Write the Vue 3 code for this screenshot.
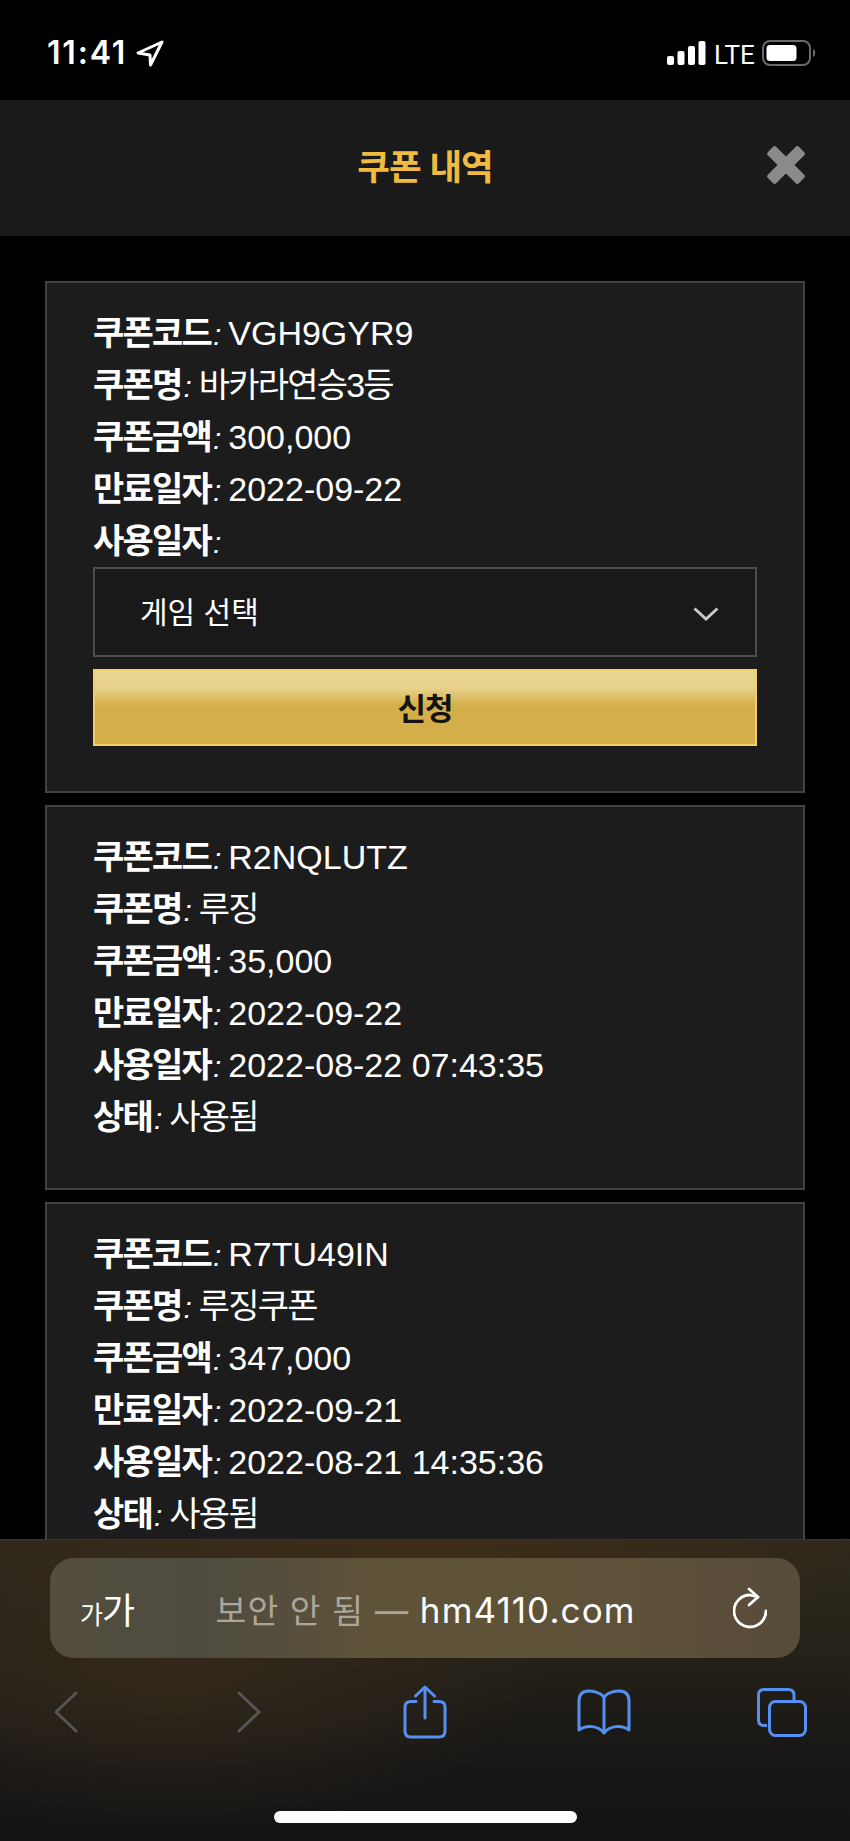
<script setup>
const coupons = [
  {
    code: 'VGH9GYR9', name: '바카라연승3등', amount: '300,000', expires: '2022-09-22', used: '', open: true
  },
  {
    code: 'R2NQLUTZ', name: '루징', amount: '35,000', expires: '2022-09-22', used: '2022-08-22 07:43:35', status: '사용됨'
  },
  {
    code: 'R7TU49IN', name: '루징쿠폰', amount: '347,000', expires: '2022-09-21', used: '2022-08-21 14:35:36', status: '사용됨'
  }
]

function rows(c) {
  const list = [
    ['쿠폰코드', c.code],
    ['쿠폰명', c.name],
    ['쿠폰금액', c.amount],
    ['만료일자', c.expires],
    ['사용일자', c.used]
  ]
  if (c.status) list.push(['상태', c.status])
  return list
}

const isKorean = (text) => /[가-힣]/.test(text)
</script>

<template>
  <div class="phone">
    <div class="status">
      <div class="clock">
        <span>11:41</span>
        <svg width="28" height="27" viewBox="0 0 28 27" fill="none" stroke="#fff" stroke-width="3" stroke-linejoin="round">
          <path d="M26 2 L2 13 L14 15 L14.500 25 Z" />
        </svg>
      </div>
      <div class="indicators">
        <svg width="39" height="24" viewBox="0 0 39 24" fill="#fff">
          <rect x="0" y="15" width="7" height="9" rx="2" />
          <rect x="10.500" y="10" width="7" height="14" rx="2" />
          <rect x="21" y="5" width="7" height="19" rx="2" />
          <rect x="31.500" y="0" width="7" height="24" rx="2" />
        </svg>
        <span class="lte">LTE</span>
        <svg class="battery" width="55" height="26" viewBox="0 0 55 26" fill="none">
          <rect x="1" y="1" width="47" height="24" rx="7" stroke="#6a6a6a" stroke-width="2" />
          <rect x="4.500" y="5" width="30" height="16" rx="3.500" fill="#fff" />
          <path d="M51 9 C54 10 54 16 51 17 Z" fill="#6a6a6a" />
        </svg>
      </div>
    </div>

    <header class="top">
      <h1>쿠폰 내역</h1>
      <svg class="close" width="38" height="38" viewBox="0 0 38 38" fill="#8a8a8a">
        <rect x="-3" y="13" width="44" height="12" rx="2.500" transform="rotate(45 19 19)" />
        <rect x="-3" y="13" width="44" height="12" rx="2.500" transform="rotate(-45 19 19)" />
      </svg>
    </header>

    <main class="list">
      <section v-for="c in coupons" :key="c.code" class="card">
        <div v-for="r in rows(c)" :key="r[0]" class="row">
          <b>{{ r[0] }}</b><i>:</i>
          <span :class="{ ko: isKorean(r[1]) }">{{ r[1] }}</span>
        </div>
        <template v-if="c.open">
          <div class="select-wrap">
            <select>
              <option>게임 선택</option>
            </select>
            <svg class="chevron" width="26" height="14" viewBox="0 0 26 14" fill="none" stroke="#c8c8c8" stroke-width="3">
              <path d="M1.500 1.500 L13 12 L24.500 1.500" />
            </svg>
          </div>
          <button class="apply">신청</button>
        </template>
      </section>
    </main>

    <footer class="safari">
      <div class="url">
        <span class="aa"><small>가</small>가</span>
        <span class="address"><em>보안 안 됨 — </em>hm4110.com</span>
        <svg width="34" height="42" viewBox="0 0 34 42" fill="none" stroke="#fff" stroke-width="2.800" stroke-linecap="round" stroke-linejoin="round">
          <path d="M33 24 A16 16 0 1 1 17 8 L25 10" />
          <path d="M16 2 L25 10 L16 18" />
        </svg>
      </div>
      <nav class="tools">
        <svg width="24" height="42" viewBox="0 0 24 42" fill="none" stroke="#555" stroke-width="3" stroke-linecap="round" stroke-linejoin="round">
          <path d="M22 2 L2 21 L22 40" />
        </svg>
        <svg class="forward" width="24" height="42" viewBox="0 0 24 42" fill="none" stroke="#555" stroke-width="3" stroke-linecap="round" stroke-linejoin="round">
          <path d="M2 2 L22 21 L2 40" />
        </svg>
        <svg class="share" width="44" height="54" viewBox="0 0 44 54" fill="none" stroke="#5590f0" stroke-width="3" stroke-linecap="round" stroke-linejoin="round">
          <path d="M13 16.500 H8 Q2 16.500 2 22 V46 Q2 52 8 52 H36 Q42 52 42 46 V22 Q42 16.500 36 16.500 H31" />
          <path d="M22 33 V2 M12.500 11 L22 2 L31.500 11" />
        </svg>
        <svg class="book" width="54" height="46" viewBox="0 0 54 46" fill="none" stroke="#5590f0" stroke-width="3" stroke-linecap="round" stroke-linejoin="round">
          <path d="M27 8 C23 3 15 2 12 2 C5 2 2 6 2 12 V41 C9 36 21 36 27 44 C33 36 45 36 52 41 V12 C52 6 49 2 42 2 C39 2 31 3 27 8 Z" />
          <path d="M27 8 V43" />
        </svg>
        <svg class="tabs" width="50" height="49" viewBox="0 0 50 49" fill="none" stroke="#5590f0" stroke-width="3" stroke-linejoin="round">
          <path d="M10 37.500 H7 Q1.500 37.500 1.500 32 V7 Q1.500 1.500 7 1.500 H31 Q37 1.500 37 7 V12" />
          <rect x="12.500" y="13.500" width="36" height="34" rx="6" />
        </svg>
      </nav>
      <div class="home"></div>
    </footer>
  </div>
</template>

<style>
html, body {
  margin: 0;
  background: #000;
}
</style>

<style scoped>
.phone {
  position: relative;
  width: 850px;
  height: 1841px;
  overflow: hidden;
  background: #000;
  color: #fff;
  font-family: "Liberation Sans", "Noto Sans CJK KR", sans-serif;
}

.status {
  height: 100px;
  display: flex;
  justify-content: space-between;
  align-items: flex-start;
  padding: 39px 33px 0 47px;
  box-sizing: border-box;
  background: #000;
}

.clock {
  display: flex;
  align-items: center;
  gap: 9px;
  font-family: Inter, sans-serif;
  font-size: 32px;
  font-weight: 600;
  letter-spacing: 1.800px;
  line-height: 28px;
}

.indicators {
  display: flex;
  align-items: flex-end;
  padding-top: 1px;
}

.lte {
  font-family: Roboto, sans-serif;
  font-size: 26px;
  line-height: 20px;
  margin: 0 9px 0 8px;
  width: 39px;
}

.battery {
  margin-bottom: -1px;
}

.top {
  position: relative;
  height: 136px;
  display: flex;
  align-items: center;
  justify-content: center;
  background: #1a1a1a;
}

.top h1 {
  margin: 0 0 8px;
  font-size: 35.500px;
  font-weight: 700;
  letter-spacing: -1px;
  color: #f0bb3f;
}

.close {
  position: absolute;
  right: 45px;
  top: 46px;
}

.list {
  display: flex;
  flex-direction: column;
  gap: 12px;
  padding: 45px 45px 0;
}

.card {
  padding: 24px 46px 45px;
  background: #1c1c1c;
  border: 2px solid #424242;
}

.row {
  height: 52px;
  line-height: 52px;
  font-size: 34px;
  white-space: nowrap;
}

.row b {
  font-weight: 700;
  letter-spacing: -1.800px;
}

.row i {
  font-size: 30px;
  font-weight: 400;
  margin: 0 7px 0 2px;
}

.row .ko {
  letter-spacing: -1.800px;
}

.select-wrap {
  position: relative;
}

.select-wrap select {
  display: block;
  width: 100%;
  height: 90px;
  padding: 0 45px;
  appearance: none;
  background: #191919;
  border: 2px solid #4d4d4d;
  border-radius: 0;
  color: #fff;
  font-family: inherit;
  font-size: 30px;
}

.chevron {
  position: absolute;
  right: 38px;
  top: 40px;
}

.apply {
  display: block;
  width: 100%;
  height: 77px;
  margin-top: 12px;
  padding: 0 0 3px;
  border: 2px solid #f3cf6c;
  border-radius: 0;
  background: linear-gradient(#e9d595 0%, #e6cf86 25%, #d4ae48 48%, #d4ae48 100%);
  color: #141414;
  font-family: inherit;
  font-size: 31px;
  font-weight: 700;
  letter-spacing: -1px;
}

.safari {
  position: absolute;
  left: 0;
  right: 0;
  bottom: 0;
  height: 302px;
  box-sizing: border-box;
  padding: 18px 50px 0;
  border-top: 1px solid #3b3628;
  background:
    radial-gradient(ellipse 460px 130px at 50% 0, #3e2d18 0%, rgba(62, 45, 24, 0) 100%),
    radial-gradient(ellipse 380px 170px at 20% 40%, #33281a 0%, rgba(51, 40, 26, 0) 100%),
    linear-gradient(#2d281c 0%, #262219 35%, #1c1a17 62%, #171616 76%, #141414 100%);
}

.url {
  height: 100px;
  display: flex;
  align-items: center;
  justify-content: space-between;
  padding: 0 33px 0 30px;
  border-radius: 24px;
  background: linear-gradient(90deg, #544e3e 0%, #4d4b40 20%, #5e5239 42%, #5f523a 75%, #574c3a 100%);
}

.aa {
  width: 60px;
  font-size: 36px;
  letter-spacing: -1px;
  white-space: nowrap;
  font-family: "Noto Sans CJK KR", sans-serif;
}

.aa small {
  font-size: 25px;
}

.address {
  margin-right: 22px;
  font-family: Inter, "Noto Sans CJK KR", sans-serif;
  font-size: 35px;
  letter-spacing: 1.100px;
  white-space: nowrap;
}

.address em {
  font-style: normal;
  font-size: 33.500px;
  color: #aba69c;
}

.tools {
  display: flex;
  align-items: center;
  height: 60px;
  margin: 24px -10px 0 4px;
}

.forward {
  margin-left: 159px;
}

.share {
  margin-left: 142px;
}

.book {
  margin-left: 130px;
}

.tabs {
  margin-left: 126px;
}

.home {
  position: absolute;
  left: 274px;
  bottom: 18px;
  width: 303px;
  height: 12px;
  border-radius: 6px;
  background: #fff;
}
</style>
